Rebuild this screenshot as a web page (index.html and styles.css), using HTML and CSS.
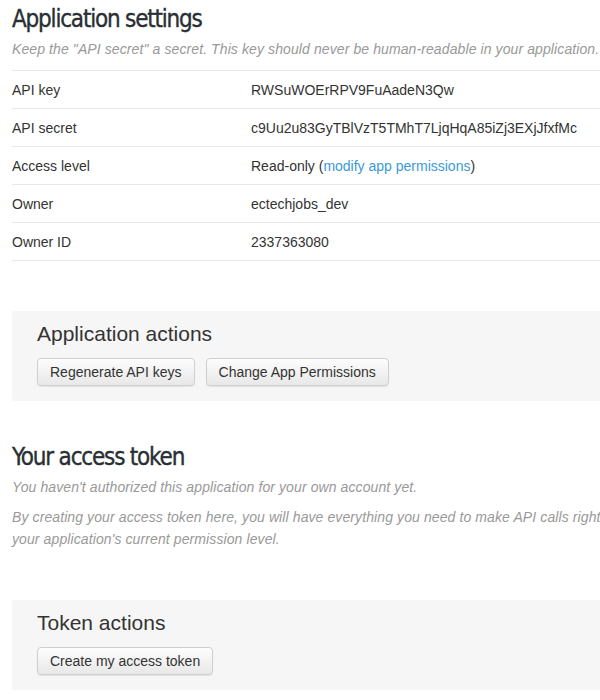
FILE: index.html
```html
<!DOCTYPE html>
<html>
<head>
<meta charset="utf-8">
<link rel="stylesheet" href="styles.css">
</head>
<body>
<div class="page">
  <h1 class="title">Application settings</h1>
  <p class="hint">Keep the "API secret" a secret. This key should never be human-readable in your application.</p>
  <div class="table">
    <div class="row"><span class="label">API key</span><span class="value">RWSuWOErRPV9FuAadeN3Qw</span></div>
    <div class="row"><span class="label">API secret</span><span class="value">c9Uu2u83GyTBlVzT5TMhT7LjqHqA85iZj3EXjJfxfMc</span></div>
    <div class="row"><span class="label">Access level</span><span class="value">Read-only (<a class="link" href="#">modify app permissions</a>)</span></div>
    <div class="row"><span class="label">Owner</span><span class="value">ectechjobs_dev</span></div>
    <div class="row"><span class="label">Owner ID</span><span class="value">2337363080</span></div>
  </div>

  <div class="actions actions-app">
    <h2 class="actions-title">Application actions</h2>
    <div class="buttons">
      <button class="btn">Regenerate API keys</button>
      <button class="btn">Change App Permissions</button>
    </div>
  </div>

  <h1 class="title title-token">Your access token</h1>
  <p class="hint hint-one">You haven't authorized this application for your own account yet.</p>
  <p class="hint hint-two">By creating your access token here, you will have everything you need to make API calls right away. The access token generated will be assigned your application's current permission level.</p>

  <div class="actions actions-token">
    <h2 class="actions-title">Token actions</h2>
    <div class="buttons">
      <button class="btn">Create my access token</button>
    </div>
  </div>
</div>
</body>
</html>
```
FILE: styles.css
```css
html, body {
  margin: 0;
  padding: 0;
  background: #fff;
  overflow: hidden;
}
.page {
  width: 930px;
  padding-left: 12px;
  font-family: "Liberation Sans", Arial, sans-serif;
  font-size: 14px;
  color: #333;
}
.title {
  margin: 0;
  padding-top: 4px;
  font-family: "DejaVu Sans Condensed", "DejaVu Sans", sans-serif;
  font-stretch: condensed;
  font-weight: normal;
  font-size: 24px;
  line-height: 30px;
  color: #292f33;
  letter-spacing: -1.2px;
  -webkit-text-stroke: 0.35px #292f33;
}
.hint {
  margin: 0;
  font-style: italic;
  color: #999;
  font-size: 14px;
  line-height: 20px;
  letter-spacing: 0.1px;
}
.title + .hint {
  margin-top: 5px;
  padding-bottom: 11px;
}
.table {
  border-top: 1px solid #e8e8e8;
}
.row {
  display: flex;
  height: 37px;
  align-items: center;
  border-bottom: 1px solid #e8e8e8;
}
.label {
  width: 239px;
}
.link {
  color: #3a9ad9;
  text-decoration: none;
}
.actions {
  background: #f6f6f6;
  border-radius: 3px;
  padding: 10px 25px 15px;
}
.actions-app {
  margin-top: 50px;
}
.actions-title {
  margin: 0;
  font-weight: normal;
  font-size: 21px;
  line-height: 25px;
  color: #333;
}
.buttons {
  display: flex;
  gap: 11px;
  margin-top: 12px;
}
.btn {
  height: 28px;
  padding: 0 12px;
  font-family: "Liberation Sans", Arial, sans-serif;
  font-size: 14px;
  color: #333;
  background: linear-gradient(#fdfdfd, #e8e8e8);
  border: 1px solid #cfcfcf;
  border-radius: 4px;
  box-shadow: 0 1px 1px rgba(0,0,0,0.08);
}
.title-token {
  margin-top: 37px;
}
.title + .hint-one {
  margin-top: 7px;
  padding-bottom: 11px;
  line-height: 16px;
}
.hint-two {
  margin-top: 0;
  line-height: 22px;
}
.actions-token {
  margin-top: 50px;
}
```
